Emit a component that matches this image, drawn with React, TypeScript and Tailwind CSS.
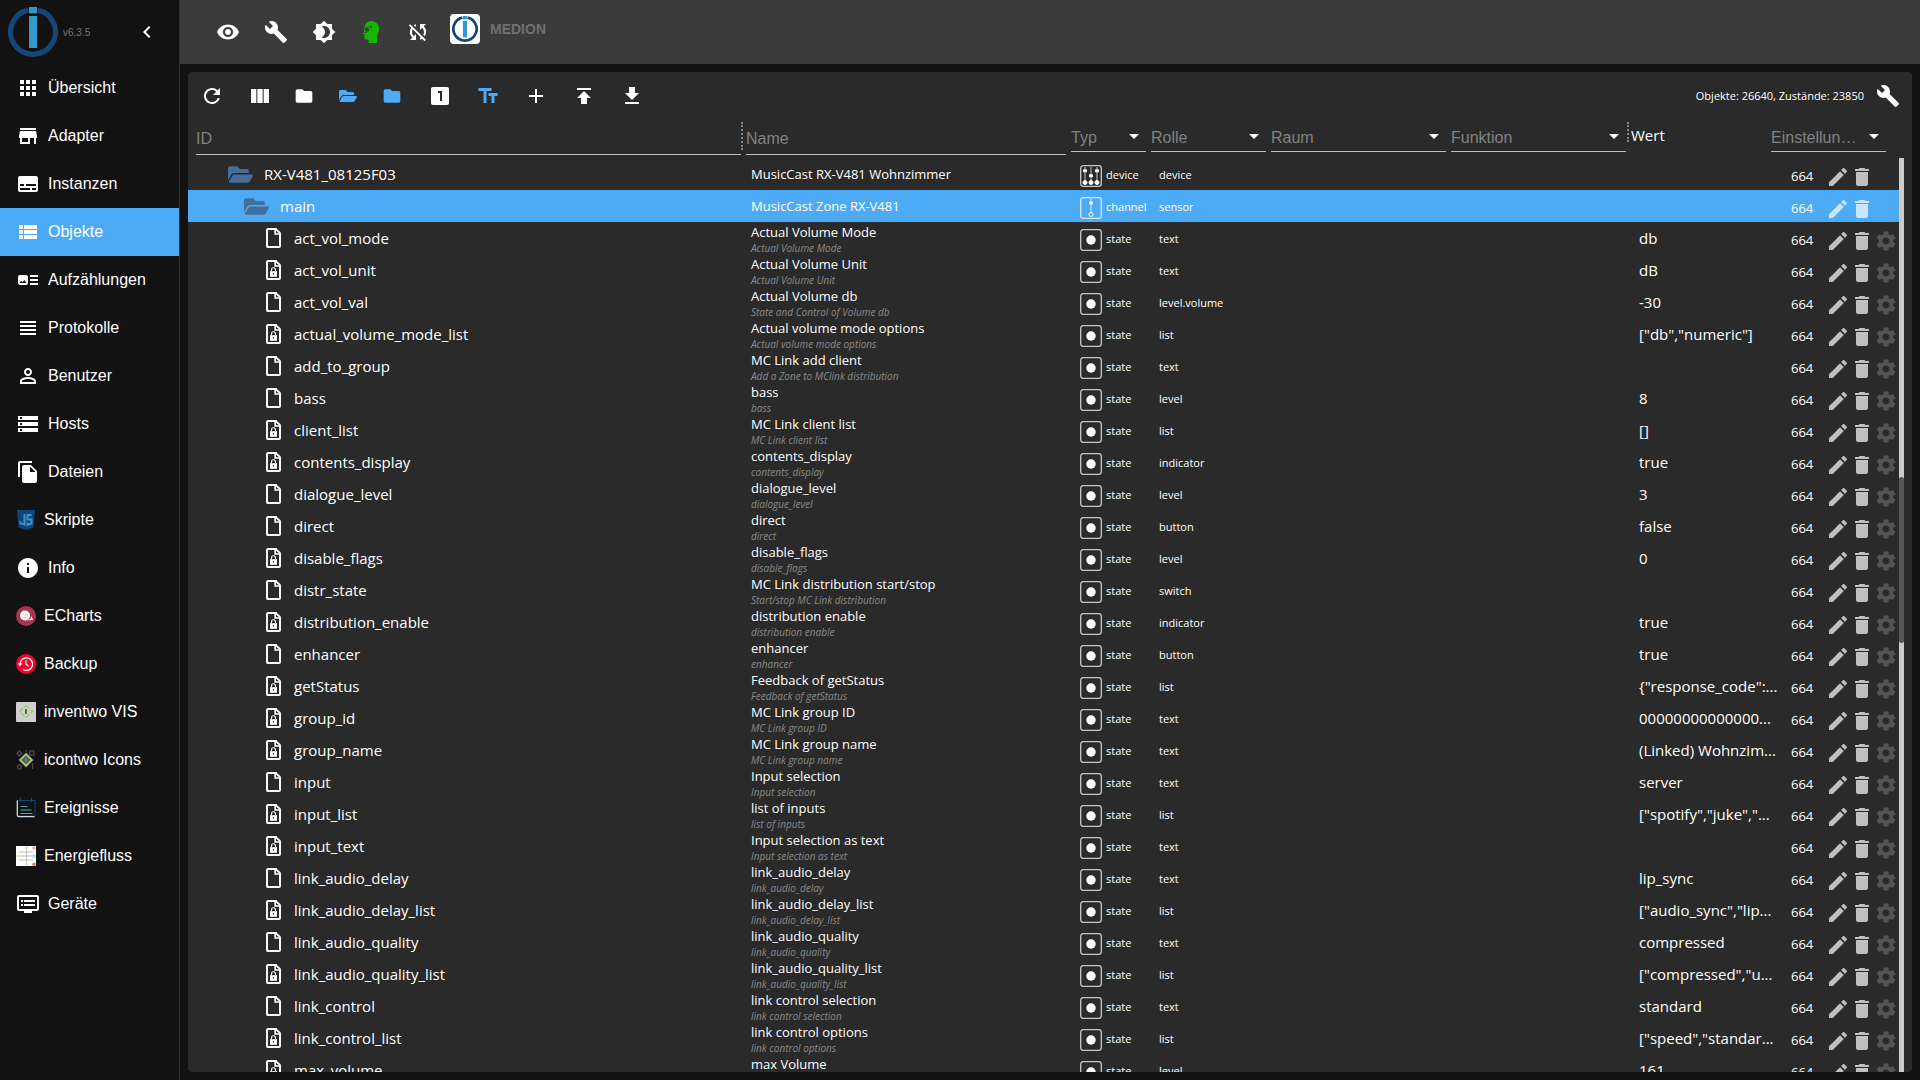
import type { ComponentType, ReactNode } from "react";
import {
  MdAdd,
  MdApps,
  MdArrowDropDown,
  MdArtTrack,
  MdBrightness4,
  MdBuild,
  MdChevronLeft,
  MdDelete,
  MdDvr,
  MdEdit,
  MdFileCopy,
  MdFolder,
  MdGetApp,
  MdInfo,
  MdLooksOne,
  MdPermIdentity,
  MdPublish,
  MdRefresh,
  MdSettings,
  MdStorage,
  MdStore,
  MdSubtitles,
  MdSyncDisabled,
  MdTextFields,
  MdViewColumn,
  MdViewHeadline,
  MdViewList,
  MdVisibility,
} from "react-icons/md";
import { FaFolderOpen } from "react-icons/fa";

type Icon = ComponentType<{ className?: string }>;

function Logo({ className }: { className: string }) {
  return (
    <svg viewBox="0 0 50 50" className={className} aria-hidden="true">
      <path
        d="M20 3.1 A22.4 22.4 0 1 0 30 3.1"
        fill="none"
        stroke="#174577"
        strokeWidth="5.2"
      />
      <rect x="21" y="0" width="8" height="6.4" fill="#3399cc" />
      <rect x="21" y="9" width="8" height="32" fill="#3399cc" />
    </svg>
  );
}

function HeadIcon({ className }: { className?: string }) {
  return (
    <svg viewBox="0 0 24 24" className={className} aria-hidden="true">
      <path
        d="M13 1c4.500 0 8 3.200 8 7.500 0 3.500-1.200 5.500-2 7V23h-8.500v-3.500H8c-1 0-1.500-.6-1.500-1.500v-3.500L5 13.500 6.300 10C6 4.500 9 1 13 1z"
        fill="#12b800"
      />
      <circle cx="9" cy="9.500" r="2.300" fill="#2b4a26" />
      <circle cx="12.800" cy="6.800" r="1.200" fill="#2b4a26" />
      <path d="M5 12.500h4" stroke="#2b4a26" strokeWidth="0.800" />
    </svg>
  );
}

function ScriptIcon() {
  return (
    <svg viewBox="0 0 20 20" className="size-5" aria-hidden="true">
      <path d="M1 0h18l-1.600 17.500L10 20l-7.400-2.500z" fill="#124577" />
      <path
        d="M8.500 4v10.500l-4-1.200v-2M15.500 5h-4v4.500h4v4l-4 1.500v-2.500"
        fill="none"
        stroke="#3399cc"
        strokeWidth="1.900"
      />
    </svg>
  );
}

function EchartsIcon() {
  return (
    <svg viewBox="0 0 20 20" className="size-5" aria-hidden="true">
      <circle cx="10" cy="10" r="10" fill="#aa344d" />
      <circle cx="9" cy="9.500" r="5" fill="#fff" />
      <path d="M10 14c3 0 5-1 5.500-4 .5 1.500 1 2.500 1.500 4-2-.5-4 .8-7 0z" fill="#fff" />
      <path d="M6 8.500c2-1 3 1.500 6 0M7 11.500c2 0 3-.5 5-.5" stroke="#d9a3ae" strokeWidth="0.700" fill="none" />
    </svg>
  );
}

function BackupIcon() {
  return (
    <svg viewBox="0 0 20 20" className="size-5" aria-hidden="true">
      <circle cx="10" cy="10" r="10" fill="#f5002f" />
      <path
        d="M4 10.500A6.300 6.300 0 1 1 7 15.500"
        fill="none"
        stroke="#fff"
        strokeWidth="1.300"
      />
      <path d="M1.800 9.500h4.600L4 12.300z" fill="#fff" />
      <path d="M10 6v4.300l2.600 2" fill="none" stroke="#fff" strokeWidth="1.100" />
    </svg>
  );
}

function InventwoIcon() {
  return (
    <svg viewBox="0 0 20 20" className="size-5" aria-hidden="true">
      <rect width="20" height="20" rx="1" fill="#cfcfcf" />
      <path
        d="M10 3.500 16.500 9.500 10 15.500 3.500 9.500z"
        fill="none"
        stroke="#8fd14a"
        strokeWidth="1.200"
        strokeDasharray="5 1.500"
      />
      <path d="M10 7v5" stroke="#333" strokeWidth="1.400" />
    </svg>
  );
}

function IcontwoIcon() {
  return (
    <svg viewBox="0 0 20 20" className="size-5" aria-hidden="true">
      <g fill="none" stroke="#4a4a4a" strokeWidth="1.300">
        <path d="M1 3.500 3.500 1 6 3.500 3.500 6z" />
        <rect x="13.500" y="1" width="4.500" height="4" />
        <circle cx="3.500" cy="17" r="2" />
        <path d="M16.500 13v6M9 1h2" />
      </g>
      <path d="M10 2.500 17.500 10 10 17.500 2.500 10z" fill="#8b8f86" />
      <path d="M10 4.500 15.500 10 10 15.500 4.500 10z" fill="#545a50" stroke="#9bd467" strokeWidth="1.400" />
      <path d="M10 8v4" stroke="#8d8d8d" strokeWidth="1.300" />
    </svg>
  );
}

function EventsIcon() {
  return (
    <svg viewBox="0 0 20 20" className="size-5" aria-hidden="true">
      <path d="M1 2.500h18V18H3" fill="none" stroke="#174577" strokeWidth="1" />
      <path d="M4.500 0v4M15.500 0v4" stroke="#174577" strokeWidth="1" />
      <path d="M1.300 2.500v14.500c0 1 .6 1.700 1.700 1.700h15.500" fill="none" stroke="#cfd9e6" strokeWidth="1.300" />
      <path d="M4.500 8.500h7M4.500 12h11M4.500 15.500h12" stroke="#4f9fc4" strokeWidth="1" />
    </svg>
  );
}

function EnergyIcon() {
  return (
    <svg viewBox="0 0 20 20" className="size-5" aria-hidden="true">
      <rect width="20" height="20" fill="#fff" />
      <path d="M2 10h16M10.500 1v18M3 6h14M3 14h14" fill="none" stroke="#b5b5b5" strokeWidth="0.900" />
      <circle cx="2.200" cy="10" r="1.800" fill="#e9e6c0" />
      <circle cx="10.500" cy="1.800" r="1.800" fill="#f0ddb4" />
      <circle cx="18" cy="2" r="1.900" fill="#f2b3bd" />
      <circle cx="18" cy="10" r="1.900" fill="#b3dff2" />
      <circle cx="18" cy="18.300" r="1.900" fill="#c99a52" />
      <circle cx="10.500" cy="18" r="1.600" fill="#e2e2e2" />
    </svg>
  );
}

const mdNav = (I: Icon) => <I className="size-6" />;

const nav: { label: string; icon: ReactNode; active?: boolean }[] = [
  { label: "Übersicht", icon: mdNav(MdApps) },
  { label: "Adapter", icon: mdNav(MdStore) },
  { label: "Instanzen", icon: mdNav(MdSubtitles) },
  { label: "Objekte", icon: mdNav(MdViewList), active: true },
  { label: "Aufzählungen", icon: mdNav(MdArtTrack) },
  { label: "Protokolle", icon: mdNav(MdViewHeadline) },
  { label: "Benutzer", icon: mdNav(MdPermIdentity) },
  { label: "Hosts", icon: mdNav(MdStorage) },
  { label: "Dateien", icon: mdNav(MdFileCopy) },
  { label: "Skripte", icon: <ScriptIcon /> },
  { label: "Info", icon: mdNav(MdInfo) },
  { label: "ECharts", icon: <EchartsIcon /> },
  { label: "Backup", icon: <BackupIcon /> },
  { label: "inventwo VIS", icon: <InventwoIcon /> },
  { label: "icontwo Icons", icon: <IcontwoIcon /> },
  { label: "Ereignisse", icon: <EventsIcon /> },
  { label: "Energiefluss", icon: <EnergyIcon /> },
  { label: "Geräte", icon: mdNav(MdDvr) },
];

function Sidebar() {
  return (
    <aside className="flex w-45 shrink-0 flex-col border-r border-[#333333]">
      <div className="flex h-16 items-center pr-5 pl-2">
        <Logo className="size-[50px]" />
        <span className="ml-[5px] text-[10px] text-[#777777]">v6.3.5</span>
        <button aria-label="Menü einklappen" className="ml-auto">
          <MdChevronLeft className="size-6" />
        </button>
      </div>
      <nav>
        {nav.map((n) => (
          <a
            key={n.label}
            href="#"
            aria-current={n.active ? "page" : undefined}
            className={
              n.active
                ? "flex h-12 items-center gap-2 bg-[#4dabf5] px-4"
                : "flex h-12 items-center gap-2 px-4"
            }
          >
            {n.icon}
            {n.label}
          </a>
        ))}
      </nav>
    </aside>
  );
}

function TopButton({ label, narrow, children }: { label: string; narrow?: boolean; children: ReactNode }) {
  return (
    <button
      aria-label={label}
      className={narrow ? "flex w-12 justify-center pr-1" : "flex w-12 justify-center"}
    >
      {children}
    </button>
  );
}

function TopBar() {
  return (
    <header className="flex h-16 shrink-0 items-center bg-[#3b3b3b] pl-6">
      <TopButton label="Sichtbarkeit">
        <MdVisibility className="size-6" />
      </TopButton>
      <TopButton label="Systemeinstellungen">
        <MdBuild className="size-6" />
      </TopButton>
      <TopButton label="Farbschema">
        <MdBrightness4 className="size-6" />
      </TopButton>
      <TopButton label="Expertenmodus" narrow>
        <HeadIcon className="size-6" />
      </TopButton>
      <TopButton label="Synchronisierung" narrow>
        <MdSyncDisabled className="size-6" />
      </TopButton>
      <div className="mb-1.5 flex items-center gap-2.5 pl-1.5">
        <span className="rounded-sm bg-white p-0.5">
          <Logo className="size-[26px]" />
        </span>
        <span className="text-sm font-bold text-[#707070]">MEDION</span>
      </div>
    </header>
  );
}

const tools: { label: string; icon: ReactNode; wide: boolean }[] = [
  { label: "Aktualisieren", icon: <MdRefresh className="size-6" />, wide: true },
  { label: "Spalten", icon: <MdViewColumn className="size-6" />, wide: true },
  { label: "Alle zuklappen", icon: <MdFolder className="size-5" />, wide: false },
  { label: "Alle aufklappen", icon: <FaFolderOpen className="size-[18px] text-[#4dabf5]" />, wide: false },
  { label: "Ebene zuklappen", icon: <MdFolder className="size-5 text-[#4dabf5]" />, wide: false },
  { label: "Ebene eins", icon: <MdLooksOne className="size-6" />, wide: true },
  { label: "Beschreibungen", icon: <MdTextFields className="size-6 text-[#4dabf5]" />, wide: true },
  { label: "Hinzufügen", icon: <MdAdd className="size-6" />, wide: true },
  { label: "Importieren", icon: <MdPublish className="size-6" />, wide: true },
  { label: "Exportieren", icon: <MdGetApp className="size-6" />, wide: true },
];

function Toolbar() {
  return (
    <div className="flex h-12 shrink-0 items-center pr-3">
      {tools.map((t) => (
        <button
          key={t.label}
          aria-label={t.label}
          className={t.wide ? "flex w-12 justify-center" : "flex w-11 justify-center pr-1"}
        >
          {t.icon}
        </button>
      ))}
      <span className="ml-auto font-['Open_Sans',sans-serif] text-[11px]">
        Objekte: 26640, Zustände: 23850
      </span>
      <button aria-label="Einstellungen" className="ml-3">
        <MdBuild className="size-6" />
      </button>
    </div>
  );
}

type RowData = {
  id: string;
  name: string;
  desc?: string;
  type?: "device" | "channel";
  role: string;
  value?: string;
  lock?: boolean;
};

const rows: RowData[] = [
  { id: "RX-V481_08125F03", name: "MusicCast RX-V481 Wohnzimmer", type: "device", role: "device" },
  { id: "main", name: "MusicCast Zone RX-V481", type: "channel", role: "sensor" },
  { id: "act_vol_mode", name: "Actual Volume Mode", desc: "Actual Volume Mode", role: "text", value: "db" },
  { id: "act_vol_unit", name: "Actual Volume Unit", desc: "Actual Volume Unit", role: "text", value: "dB", lock: true },
  { id: "act_vol_val", name: "Actual Volume db", desc: "State and Control of Volume db", role: "level.volume", value: "-30" },
  { id: "actual_volume_mode_list", name: "Actual volume mode options", desc: "Actual volume mode options", role: "list", value: '["db","numeric"]', lock: true },
  { id: "add_to_group", name: "MC Link add client", desc: "Add a Zone to MClink distribution", role: "text" },
  { id: "bass", name: "bass", desc: "bass", role: "level", value: "8" },
  { id: "client_list", name: "MC Link client list", desc: "MC Link client list", role: "list", value: "[]", lock: true },
  { id: "contents_display", name: "contents_display", desc: "contents_display", role: "indicator", value: "true", lock: true },
  { id: "dialogue_level", name: "dialogue_level", desc: "dialogue_level", role: "level", value: "3" },
  { id: "direct", name: "direct", desc: "direct", role: "button", value: "false" },
  { id: "disable_flags", name: "disable_flags", desc: "disable_flags", role: "level", value: "0", lock: true },
  { id: "distr_state", name: "MC Link distribution start/stop", desc: "Start/stop MC Link distribution", role: "switch" },
  { id: "distribution_enable", name: "distribution enable", desc: "distribution enable", role: "indicator", value: "true", lock: true },
  { id: "enhancer", name: "enhancer", desc: "enhancer", role: "button", value: "true" },
  { id: "getStatus", name: "Feedback of getStatus", desc: "Feedback of getStatus", role: "list", value: '{"response_code":...', lock: true },
  { id: "group_id", name: "MC Link group ID", desc: "MC Link group ID", role: "text", value: "00000000000000...", lock: true },
  { id: "group_name", name: "MC Link group name", desc: "MC Link group name", role: "text", value: "(Linked) Wohnzim...", lock: true },
  { id: "input", name: "Input selection", desc: "Input selection", role: "text", value: "server" },
  { id: "input_list", name: "list of inputs", desc: "list of inputs", role: "list", value: '["spotify","juke","...', lock: true },
  { id: "input_text", name: "Input selection as text", desc: "Input selection as text", role: "text", lock: true },
  { id: "link_audio_delay", name: "link_audio_delay", desc: "link_audio_delay", role: "text", value: "lip_sync" },
  { id: "link_audio_delay_list", name: "link_audio_delay_list", desc: "link_audio_delay_list", role: "list", value: '["audio_sync","lip...', lock: true },
  { id: "link_audio_quality", name: "link_audio_quality", desc: "link_audio_quality", role: "text", value: "compressed" },
  { id: "link_audio_quality_list", name: "link_audio_quality_list", desc: "link_audio_quality_list", role: "list", value: '["compressed","u...', lock: true },
  { id: "link_control", name: "link control selection", desc: "link control selection", role: "text", value: "standard" },
  { id: "link_control_list", name: "link control options", desc: "link control options", role: "list", value: '["speed","standar...', lock: true },
  { id: "max_volume", name: "max Volume", desc: "max Volume", role: "level", value: "161", lock: true },
];

function FileIcon({ lock }: { lock?: boolean }) {
  return (
    <svg viewBox="0 0 15 20" className="h-5 w-[15px] shrink-0" fill="none" aria-hidden="true">
      <path d="M2 1h7.800L14 5.200V18.200q0 .8-.8.8H1.800q-.8 0-.8-.8V1.800Q1 1 2 1z" stroke="#fff" strokeWidth="1.900" />
      <path d="M9.200 1v5H14" stroke="#fff" strokeWidth="1.700" />
      {lock && (
        <>
          <path d="M5.500 11.500V9.800a2 2 0 0 1 4 0v1.700" stroke="#fff" strokeWidth="1.100" />
          <path d="M4 11.200h7v5.600H4zM7 13v1.500h1V13z" fill="#fff" fillRule="evenodd" />
        </>
      )}
    </svg>
  );
}

function TypeIcon({ type }: { type?: "device" | "channel" }) {
  return (
    <svg viewBox="0 0 22 22" className="size-[22px] shrink-0" fill="none" aria-hidden="true">
      <rect x="0.700" y="0.700" width="20.600" height="20.600" rx="2.500" stroke="#fff" strokeOpacity="0.750" strokeWidth="1.300" />
      {type === "device" && (
        <g stroke="#fff" fill="#fff">
          <path d="M5 2v14M11 2v14M17 2v14" strokeOpacity="0.700" />
          <path d="M3.500 4.800h3v2h-3zM9.500 9.800h3v2h-3zM15.500 4.800h3v2h-3z" />
          <circle cx="5" cy="17.500" r="2" />
          <circle cx="11" cy="17.500" r="2" />
          <circle cx="17" cy="17.500" r="2" />
        </g>
      )}
      {type === "channel" && (
        <g stroke="#fff">
          <path d="M11 2v13" strokeOpacity="0.800" />
          <path d="M9.500 5h3v2h-3z" fill="#fff" />
          <circle cx="11" cy="17.500" r="2" />
        </g>
      )}
      {!type && <circle cx="11" cy="11" r="4.700" fill="#fff" />}
    </svg>
  );
}

function indentOf(type?: "device" | "channel") {
  if (type === "device") return "flex h-8 items-center gap-[11px] pl-10";
  if (type === "channel") return "flex h-8 items-center gap-[11px] pl-14";
  return "flex h-8 items-center gap-[13px] pl-[78px]";
}

function Row({ row }: { row: RowData }) {
  const selected = row.type === "channel";
  return (
    <tr className={selected ? "h-8 bg-[#4dabf5]" : "h-8"}>
      <td>
        <div className={indentOf(row.type)}>
          {row.type ? (
            <FaFolderOpen className="size-[25px] text-[#446f9c]" />
          ) : (
            <FileIcon lock={row.lock} />
          )}
          <span className="text-[15px]">{row.id}</span>
        </div>
      </td>
      <td>
        <div className="flex h-8 flex-col justify-center pl-2.5 text-[13px]">
          <span className="leading-5">{row.name}</span>
          {row.desc && (
            <span className="text-[10px] leading-3 text-[#8a8a8a] italic">{row.desc}</span>
          )}
        </div>
      </td>
      <td>
        <div className="flex h-8 items-center gap-1 pt-1 pl-[13px] text-[11px]">
          <TypeIcon type={row.type} />
          <span className="pb-0.5">{row.type ?? "state"}</span>
        </div>
      </td>
      <td className="pt-0.5 pl-3 text-[11px]">{row.role}</td>
      <td />
      <td />
      <td className="pl-3 text-[15px] whitespace-nowrap">{row.value}</td>
      <td>
        <div className="flex h-8 items-center pt-1.5 pl-6">
          <button className="w-[35px] text-left text-[13px]">664</button>
          <button aria-label="Bearbeiten" className="text-white/70">
            <MdEdit className="size-6" />
          </button>
          <button aria-label="Löschen" className="text-white/70">
            <MdDelete className="size-6" />
          </button>
          {!row.type && (
            <button aria-label="Konfigurieren" className="text-white/20">
              <MdSettings className="size-6" />
            </button>
          )}
        </div>
      </td>
    </tr>
  );
}

function SelectHead({ label, last }: { label: string; last?: boolean }) {
  return (
    <th className="align-top font-normal">
      <div className={last ? "relative mr-[13px] ml-1" : "relative mr-px ml-1"}>
        <select
          aria-label={label}
          className="block h-8 w-full appearance-none truncate border-b border-white/70 bg-transparent pt-1 pr-6 text-base text-[#828282]"
        >
          <option>{label}</option>
        </select>
        <MdArrowDropDown className="pointer-events-none absolute top-1 right-0 size-6" />
      </div>
    </th>
  );
}

function ObjectTable() {
  return (
    <table className="w-full table-fixed border-collapse font-['Open_Sans',sans-serif]">
      <colgroup>
        <col />
        <col className="w-[326px]" />
        <col className="w-20" />
        <col className="w-[120px]" />
        <col className="w-[180px]" />
        <col className="w-[180px]" />
        <col className="w-[140px]" />
        <col className="w-[132px]" />
      </colgroup>
      <thead className="font-['Liberation_Sans',sans-serif]">
        <tr className="h-[38px]">
          <th className="align-top font-normal">
            <input
              aria-label="ID"
              placeholder="ID"
              className="ml-2 block h-[35px] w-[calc(100%-8px)] border-b border-white/70 bg-transparent pt-1 placeholder:text-[#828282]"
            />
          </th>
          <th className="align-top font-normal">
            <div className="flex gap-[3px] pr-px">
              <span className="mt-0.5 h-7 border-l-2 border-dotted border-[#858585]" />
              <input
                aria-label="Name"
                placeholder="Name"
                className="block h-[35px] min-w-0 flex-1 border-b border-white/70 bg-transparent pt-1 placeholder:text-[#828282]"
              />
            </div>
          </th>
          <SelectHead label="Typ" />
          <SelectHead label="Rolle" />
          <SelectHead label="Raum" />
          <SelectHead label="Funktion" />
          <th className="text-left align-top font-normal">
            <div className="flex gap-0.5">
              <span className="mt-0.5 h-5 border-l-2 border-dotted border-[#858585]" />
              <span className="pt-[3px] font-['Open_Sans',sans-serif] text-[15px] leading-6">Wert</span>
            </div>
          </th>
          <SelectHead label="Einstellungen" last />
        </tr>
      </thead>
      <tbody>
        {rows.map((r) => (
          <Row key={r.id} row={r} />
        ))}
      </tbody>
    </table>
  );
}

export default function App() {
  return (
    <div className="flex h-screen overflow-hidden bg-[#121212] font-['Liberation_Sans',sans-serif] text-base text-white">
      <Sidebar />
      <div className="flex min-w-0 flex-1 flex-col">
        <TopBar />
        <main className="m-2 flex min-h-0 flex-1 flex-col overflow-hidden rounded bg-[#2a2a2a]">
          <Toolbar />
          <div className="flex min-h-0 flex-1 pr-2">
            <div className="min-w-0 flex-1 overflow-hidden">
              <ObjectTable />
            </div>
            <div className="mt-[38px] flex w-[5px] flex-col bg-[#cbcbcb]">
              <div className="mt-[319px] h-[166px] rounded-sm bg-[#555555]" />
            </div>
          </div>
        </main>
      </div>
    </div>
  );
}
